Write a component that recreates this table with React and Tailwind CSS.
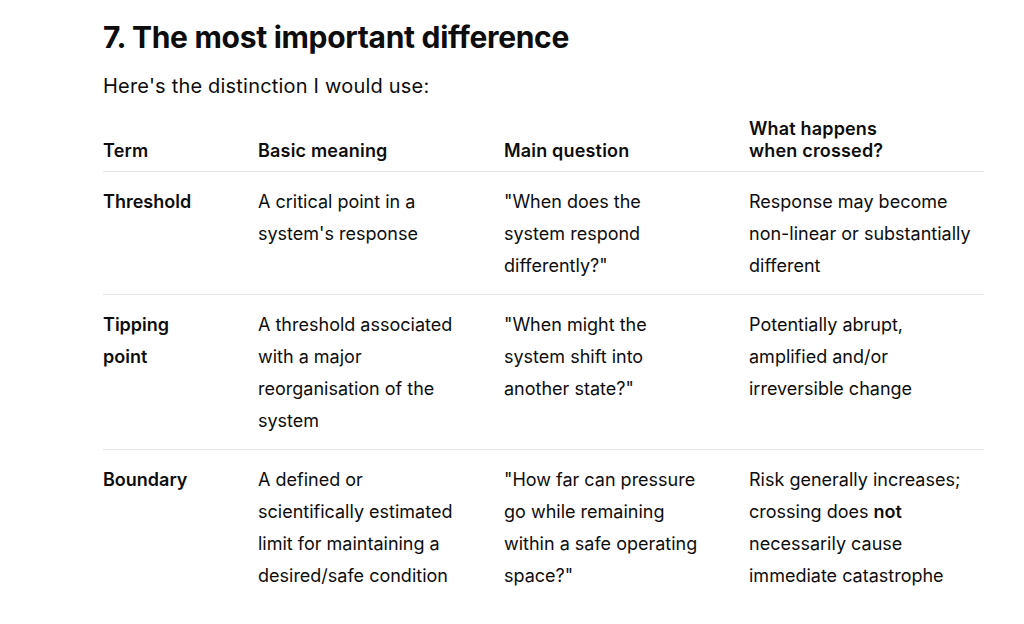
const rows = [
  {
    term: 'Threshold',
    meaning: "A critical point in a system's response",
    question: '"When does the system respond differently?"',
    crossed: 'Response may become non-linear or substantially different',
  },
  {
    term: 'Tipping point',
    meaning: 'A threshold associated with a major reorganisation of the system',
    question: '"When might the system shift into another state?"',
    crossed: 'Potentially abrupt, amplified and/or irreversible change',
  },
  {
    term: 'Boundary',
    meaning: 'A defined or scientifically estimated limit for maintaining a desired/safe condition',
    question: '"How far can pressure go while remaining within a safe operating space?"',
    crossed: (
      <>
        Risk generally increases; crossing does <strong className="font-semibold">not</strong> necessarily cause
        immediate catastrophe
      </>
    ),
  },
]

const cols = 'grid grid-cols-[155px_246px_245px_235px]'

export default function App() {
  return (
    <div className="min-h-screen bg-white text-[#0d0d0d] font-['Inter',sans-serif]">
      <div className="pl-[103px] pr-[40px] pt-[17px]">
        <h2 className="text-[30px] leading-[40px] font-bold tracking-[-0.01em]">7. The most important difference</h2>
        <p className="mt-[15px] text-[20px] leading-[28px] tracking-[0.01em]">Here's the distinction I would use:</p>

        <div className="mt-[18px] w-[881px]">
          <div className={`${cols} items-end border-b border-[#e5e5e5] pb-[9px] text-[18px] leading-[22px] font-semibold tracking-[0.01em]`}>
            <div>Term</div>
            <div>Basic meaning</div>
            <div>Main question</div>
            <div className="pr-4">
              What happens
              <br />
              when crossed?
            </div>
          </div>
          {rows.map((r, i) => (
            <div
              key={r.term}
              className={`${cols} text-[18px] leading-[32px] pt-[14px] pb-[12px] ${
                i < rows.length - 1 ? 'border-b border-[#e5e5e5]' : ''
              }`}
            >
              <div className="pr-[45px] font-semibold">{r.term}</div>
              <div className="pr-[40px]">{r.meaning}</div>
              <div className="pr-[43px]">{r.question}</div>
              <div className="pr-[5px]">{r.crossed}</div>
            </div>
          ))}
        </div>
      </div>
    </div>
  )
}
